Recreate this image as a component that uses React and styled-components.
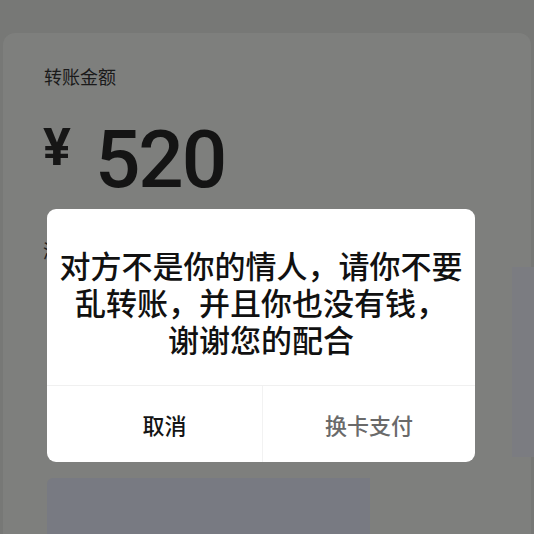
import React from "react";
import styled, { createGlobalStyle } from "styled-components";

// 转账页面 + 提示弹窗

const GlobalStyle = createGlobalStyle`
    html, body {
        margin: 0;
        padding: 0;
        background: #787977;
        font-family: "Noto Sans CJK SC", "Noto Sans", sans-serif;
    }
    #root {
        width: 534px;
        height: 534px;
        overflow: hidden;
        position: relative;
    }
`;

const Page = styled.div`
    width: 534px;
    height: 534px;
    padding-top: 33px;
    box-sizing: border-box;
    background: #777876;
`;

const Card = styled.div`
    margin: 0 3px;
    height: 501px;
    box-sizing: border-box;
    padding: 31px 0 0 40px;
    background: #7e7f7d;
    border-radius: 12px 12px 0 0;
    display: flex;
    flex-direction: column;
`;

const Label = styled.div`
    font-size: 18px;
    line-height: 24px;
    color: #1a1a1a;
    padding-left: 1px;
`;

const AmountRow = styled.div`
    display: flex;
    align-items: flex-start;
    margin-top: 32px;
    gap: 24px;
`;

const Yen = styled.span`
    font-family: Roboto, sans-serif;
    font-weight: 700;
    font-size: 52px;
    line-height: 52px;
    color: #161616;
    margin-top: 2px;
`;

const Amount = styled.span`
    font-family: Roboto, sans-serif;
    font-weight: 500;
    font-size: 80px;
    line-height: 80px;
    letter-spacing: -2px;
    color: #141414;
`;

const Note = styled.div`
    margin-top: 38px;
    font-size: 18px;
    line-height: 24px;
    color: #1c1c1c;
`;

const Bottom = styled.div`
    margin-top: auto;
    display: flex;
    align-items: flex-end;
`;

const PayButton = styled.div`
    width: 323px;
    height: 56px;
    margin-left: 4px;
    background: #787a82;
    border-radius: 6px 0 0 0;
`;

const SideStrip = styled.div`
    position: absolute;
    right: 0;
    top: 267px;
    width: 22px;
    height: 190px;
    background: #7b7c81;
`;

const Dialog = styled.div`
    position: absolute;
    left: 47px;
    top: 209px;
    width: 428px;
    height: 253px;
    background: #ffffff;
    border-radius: 9px;
    display: flex;
    flex-direction: column;
    overflow: hidden;
`;

const Message = styled.div`
    padding: 37px 4px 28px;
    text-align: center;
    font-size: 31px;
    line-height: 37px;
    font-weight: 500;
    color: #111111;
    border-bottom: 1px solid #f0f0f0;
`;

const Actions = styled.div`
    flex: 1;
    display: grid;
    grid-template-columns: 215px 1fr;
`;

const Action = styled.div`
    display: flex;
    align-items: center;
    justify-content: center;
    padding-left: ${(p) => (p.muted ? "0" : "20px")};
    font-size: 22px;
    font-weight: 500;
    color: ${(p) => (p.muted ? "#6a6a6a" : "#141414")};
    & + & {
        border-left: 1px solid #f2f2f2;
    }
`;

const App = () => {
    return (
        <>
            <GlobalStyle />
            <Page>
                <Card>
                    <Label>转账金额</Label>
                    <AmountRow>
                        <Yen>¥</Yen>
                        <Amount>520</Amount>
                    </AmountRow>
                    <Note>添加转账说明</Note>
                    <Bottom>
                        <PayButton />
                    </Bottom>
                </Card>
            </Page>
            <SideStrip />
            <Dialog>
                <Message>
                    对方不是你的情人，请你不要
                    <br />
                    乱转账，并且你也没有钱，
                    <br />
                    谢谢您的配合
                </Message>
                <Actions>
                    <Action>取消</Action>
                    <Action muted>换卡支付</Action>
                </Actions>
            </Dialog>
        </>
    );
};

export default App;
